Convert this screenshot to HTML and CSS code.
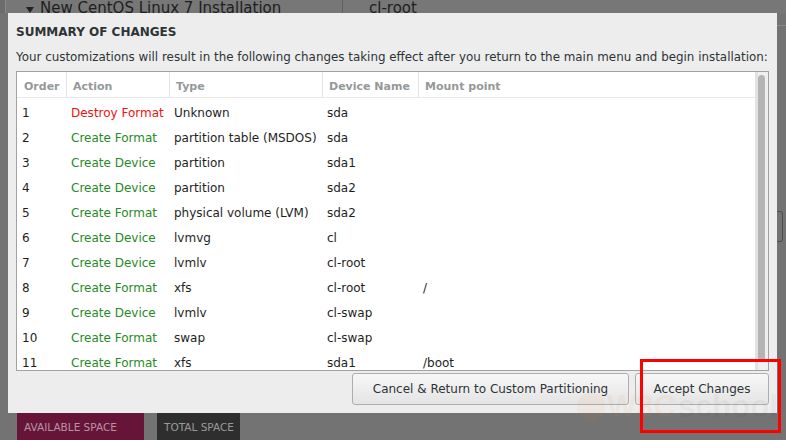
FILE: index.html
```html
<!DOCTYPE html>
<html lang="en">
<head>
<meta charset="utf-8">
<title>Summary of Changes</title>
<link rel="stylesheet" href="styles.css">
</head>
<body>
<div class="desktop">
  <div class="bg-top">
    <div class="bg-strip"></div>
    <div class="bg-pane bg-pane-left">
      <svg class="expander" width="8" height="6" viewBox="0 0 8 6"><path d="M0 0 L8 0 L4 6 Z" fill="#222"/></svg>
      <span>New CentOS Linux 7 Installation</span>
    </div>
    <div class="bg-pane bg-pane-right"><span>cl-root</span></div>
  </div>
  <div class="bg-middle">
    <div class="bg-edge">
      <div class="edge-line"></div>
      <div class="edge-btn"></div>
    </div>
  </div>
  <div class="bg-bottom">
    <div class="chip chip-available">AVAILABLE SPACE</div>
    <div class="chip chip-total">TOTAL SPACE</div>
  </div>
</div>

<div class="dialog">
  <h1 class="title">SUMMARY OF CHANGES</h1>
  <p class="subtitle">Your customizations will result in the following changes taking effect after you return to the main menu and begin installation:</p>
  <div class="changes">
    <div class="grid">
      <div class="row head">
        <div class="cell">Order</div>
        <div class="cell">Action</div>
        <div class="cell">Type</div>
        <div class="cell">Device Name</div>
        <div class="cell">Mount point</div>
      </div>
      <div class="row item"><div class="cell">1</div><div class="cell destroy">Destroy Format</div><div class="cell">Unknown</div><div class="cell">sda</div><div class="cell"></div></div>
      <div class="row item"><div class="cell">2</div><div class="cell create">Create Format</div><div class="cell">partition table (MSDOS)</div><div class="cell">sda</div><div class="cell"></div></div>
      <div class="row item"><div class="cell">3</div><div class="cell create">Create Device</div><div class="cell">partition</div><div class="cell">sda1</div><div class="cell"></div></div>
      <div class="row item"><div class="cell">4</div><div class="cell create">Create Device</div><div class="cell">partition</div><div class="cell">sda2</div><div class="cell"></div></div>
      <div class="row item"><div class="cell">5</div><div class="cell create">Create Format</div><div class="cell">physical volume (LVM)</div><div class="cell">sda2</div><div class="cell"></div></div>
      <div class="row item"><div class="cell">6</div><div class="cell create">Create Device</div><div class="cell">lvmvg</div><div class="cell">cl</div><div class="cell"></div></div>
      <div class="row item"><div class="cell">7</div><div class="cell create">Create Device</div><div class="cell">lvmlv</div><div class="cell">cl-root</div><div class="cell"></div></div>
      <div class="row item"><div class="cell">8</div><div class="cell create">Create Format</div><div class="cell">xfs</div><div class="cell">cl-root</div><div class="cell">/</div></div>
      <div class="row item"><div class="cell">9</div><div class="cell create">Create Device</div><div class="cell">lvmlv</div><div class="cell">cl-swap</div><div class="cell"></div></div>
      <div class="row item"><div class="cell">10</div><div class="cell create">Create Format</div><div class="cell">swap</div><div class="cell">cl-swap</div><div class="cell"></div></div>
      <div class="row item"><div class="cell">11</div><div class="cell create">Create Format</div><div class="cell">xfs</div><div class="cell">sda1</div><div class="cell">/boot</div></div>
    </div>
    <div class="scrollbar"><div class="thumb"></div></div>
  </div>
  <div class="actions">
    <button class="btn btn-cancel">Cancel &amp; Return to Custom Partitioning</button>
    <button class="btn btn-accept">Accept Changes</button>
  </div>
</div>

<div class="watermark"><span class="wm-logo"></span><span class="wm-w3c">W3C</span><span class="wm-school">school</span></div>
<div class="highlight"></div>
</body>
</html>
```

FILE: styles.css
```css
html, body {
  margin: 0;
  padding: 0;
}

body {
  width: 786px;
  height: 440px;
  overflow: hidden;
  position: relative;
  background: #737373;
  font-family: "DejaVu Sans", sans-serif;
}

/* ---------- dimmed background window ---------- */
.desktop {
  height: 440px;
  display: flex;
  flex-direction: column;
}

.bg-top {
  height: 13px;
  display: flex;
  overflow: hidden;
}

.bg-strip {
  width: 5px;
  background: #6c6c6c;
  border-right: 1px solid #8a8a8a;
}

.bg-pane {
  background: #777777;
  color: #1e1e1e;
  font-size: 15px;
  line-height: 15px;
  padding-top: 1px;
  white-space: nowrap;
}

.bg-pane-left {
  width: 337px;
  border-right: 1px solid #5f5f5f;
  padding-left: 20px;
  box-sizing: border-box;
  display: flex;
  gap: 6px;
}

.expander {
  margin-top: 6px;
}

.bg-pane-right {
  flex: 1;
  padding-left: 26px;
}

.bg-middle {
  flex: 1;
  display: flex;
  justify-content: flex-end;
}

.bg-edge {
  width: 9px;
  padding-top: 12px;
}

.edge-line {
  height: 1px;
  background: #8a8a8a;
}

.edge-btn {
  margin-top: 185px;
  width: 6px;
  height: 31px;
  box-sizing: border-box;
  border: 1px solid #4f4f4f;
  border-left: none;
  border-radius: 0 3px 3px 0;
}

.bg-bottom {
  height: 27px;
  display: flex;
  gap: 13px;
  padding-left: 17px;
}

.chip {
  font-size: 10.5px;
  line-height: 25px;
  padding-top: 2px;
  padding-left: 7px;
  box-sizing: border-box;
}

.chip-available {
  width: 127px;
  background: #661538;
  color: #b893a4;
}

.chip-total {
  width: 83px;
  background: #2e2e2e;
  color: #9a9a9a;
}

/* ---------- dialog ---------- */
.dialog {
  position: absolute;
  left: 8px;
  top: 13px;
  width: 769px;
  height: 400px;
  box-sizing: border-box;
  background: #ededed;
  padding: 12px 8px 0 8px;
  display: flex;
  flex-direction: column;
  color: #2e3436;
}

.title {
  margin: 0;
  font-size: 12px;
  line-height: 14px;
  font-weight: bold;
  color: #2e3436;
}

.subtitle {
  margin: 11px 0 0 0;
  font-size: 11.9px;
  line-height: 14px;
  white-space: nowrap;
  color: #2e3436;
}

.changes {
  margin-top: 7px;
  height: 300px;
  box-sizing: border-box;
  border: 1px solid #a2a2a2;
  background: #ffffff;
  display: flex;
}

.grid {
  flex: 1;
  overflow: hidden;
}

.row {
  display: grid;
  grid-template-columns: 49px 103px 153px 96px 1fr;
  height: 25px;
}

.cell {
  white-space: nowrap;
  overflow: hidden;
}

.head {
  border-bottom: 1px solid #e8e8e8;
  font-size: 11px;
  font-weight: bold;
  color: #959898;
}

.head .cell {
  padding-top: 4px;
  line-height: 21px;
  padding-left: 6px;
  border-left: 1px solid #e3e3e3;
}

.head .cell:first-child {
  border-left: none;
  padding-left: 7px;
}

.item .cell {
  padding-left: 5px;
  padding-top: 5px;
  line-height: 20px;
  font-size: 12px;
  color: #1e1e1e;
}

.item .destroy {
  color: #ee1111;
}

.item .create {
  color: #268a26;
}

.scrollbar {
  width: 13px;
  box-sizing: border-box;
  padding: 3px 3px 9px 3px;
  background: linear-gradient(to right, #e2e2e2 3px, #efefef 3px);
  display: flex;
  flex-direction: column;
}

.thumb {
  flex: 1;
  background: #b4b4b4;
  border-radius: 4px;
}

.actions {
  margin-top: 2px;
  display: flex;
  justify-content: flex-end;
  gap: 6px;
}

.btn {
  height: 32px;
  box-sizing: border-box;
  border: 1px solid #aeaeae;
  border-radius: 3px;
  background: linear-gradient(#f7f7f7, #e4e4e4);
  font-family: "DejaVu Sans", sans-serif;
  font-size: 12px;
  color: #2e3436;
  padding: 0;
}

.btn-cancel {
  width: 277px;
}

.btn-accept {
  width: 134px;
}

/* ---------- overlays ---------- */
.watermark {
  position: absolute;
  left: 577px;
  top: 390px;
  display: flex;
  align-items: center;
  gap: 2px;
  font-family: "Liberation Sans", sans-serif;
  font-weight: bold;
  font-size: 31px;
  line-height: 34px;
  pointer-events: none;
}

.wm-logo {
  width: 28px;
  height: 28px;
  border-radius: 50%;
  background: rgba(230, 120, 40, 0.06);
}

.wm-w3c {
  color: rgba(230, 120, 40, 0.07);
}

.wm-school {
  color: rgba(0, 0, 0, 0.05);
}

.highlight {
  position: absolute;
  left: 640px;
  top: 359px;
  width: 141px;
  height: 74px;
  box-sizing: border-box;
  border: 3px solid #ff0000;
}
```
